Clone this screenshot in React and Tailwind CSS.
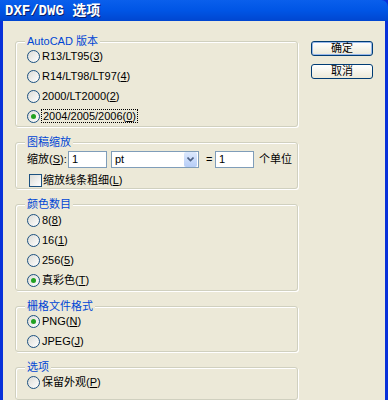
const font = { fontFamily: '"Liberation Sans", "Noto Sans CJK SC", sans-serif' };

function U({ children }) {
  return <span className="underline underline-offset-1">{children}</span>;
}

function Radio({ checked, children, focus }) {
  return (
    <div className="flex h-5 items-center">
      <span className="flex h-[13px] w-[13px] shrink-0 items-center justify-center rounded-full border border-[#1c5180] bg-gradient-to-br from-[#dcdcd7] to-white">
        {checked && <span className="h-[5px] w-[5px] rounded-full bg-[#21a121]" />}
      </span>
      <span className={focus ? 'ml-px border border-dotted border-black px-px leading-[12px]' : 'ml-[2px]'}>{children}</span>
    </div>
  );
}

function Group({ label, className, children }) {
  return (
    <div className={'relative rounded-[3px] border border-[#d0d0bf] shadow-[inset_1px_1px_0_white,1px_1px_0_white] ' + className}>
      <span className="absolute -top-[7px] left-[9px] bg-[#ece9d8] px-[2px] leading-[12px] text-[#0046d5]">{label}</span>
      {children}
    </div>
  );
}

function Button({ children, primary }) {
  return (
    <button
      className={
        'flex h-[15px] w-[62px] items-center justify-center rounded-[3px] border border-[#003c74] bg-gradient-to-b from-white to-[#ece9d8] text-[11px] leading-none text-black ' +
        (primary ? 'shadow-[inset_0_0_0_1px_#98b8ea]' : '')
      }
    >
      {children}
    </button>
  );
}

export default function App() {
  return (
    <div className="h-[400px] w-[388px] overflow-hidden bg-[#0831d9]" style={font}>
      {/* Title bar */}
      <div className="flex h-[21px] items-center rounded-tr-[7px] bg-gradient-to-b from-[#0a5fec] via-[#0055e5] to-[#0046d0] pl-[5px]">
        <span
          className="text-[14px] font-bold leading-none text-white [text-shadow:1px_1px_0_#0a1f6b]"
          style={{ fontFamily: '"Liberation Mono", "Noto Sans CJK SC", monospace' }}
        >
          DXF/DWG 选项
        </span>
      </div>

      <div className="mx-[3px] flex h-[379px] bg-[#ece9d8] pt-5 text-[11px] text-black">
        {/* Left column */}
        <div className="ml-[12px] flex w-[283px] shrink-0 flex-col gap-[15px]">
          <Group label="AutoCAD 版本" className="h-[88px] pl-[11px] pt-[4px]">
            <Radio>R13/LT95(<U>3</U>)</Radio>
            <Radio>R14/LT98/LT97(<U>4</U>)</Radio>
            <Radio>2000/LT2000(<U>2</U>)</Radio>
            <Radio checked focus>2004/2005/2006(<U>0</U>)</Radio>
          </Group>

          <Group label="图稿缩放" className="h-[53px] pl-[11px] pt-[8px]">
            <div className="flex h-[17px] items-center">
              <span className="w-[41px] shrink-0">缩放(<U>S</U>):</span>
              <span className="flex h-[17px] w-[39px] shrink-0 items-center border border-[#7f9db9] bg-white pl-[3px]">1</span>
              <span className="ml-[4px] flex h-[17px] w-[88px] shrink-0 items-center border border-[#7f9db9] bg-white pl-[3px]">
                <span className="flex-1">pt</span>
                <span className="mr-px flex h-[15px] w-[13px] items-center justify-center rounded-[2px] bg-gradient-to-b from-[#dde9fd] to-[#b6cdf7]">
                  <svg width="7" height="5" viewBox="0 0 7 5">
                    <path d="M0.5 0.5 L3.5 3.5 L6.5 0.5" fill="none" stroke="#4d6185" strokeWidth="1.6" />
                  </svg>
                </span>
              </span>
              <span className="ml-[7px] w-[9px] shrink-0">=</span>
              <span className="flex h-[17px] w-[39px] shrink-0 items-center border border-[#7f9db9] bg-white pl-[3px]">1</span>
              <span className="ml-[5px] shrink-0">个单位</span>
            </div>
            <div className="mt-[4px] flex h-4 items-center pl-[2px]">
              <span className="h-[13px] w-[13px] shrink-0 border border-[#1c5180] bg-gradient-to-br from-[#dcdcd7] to-white" />
              <span className="ml-[1px]">缩放线条粗细(<U>L</U>)</span>
            </div>
          </Group>

          <Group label="颜色数目" className="h-[88px] pl-[11px] pt-[5px]">
            <Radio>8(<U>8</U>)</Radio>
            <Radio>16(<U>1</U>)</Radio>
            <Radio>256(<U>5</U>)</Radio>
            <Radio checked>真彩色(<U>T</U>)</Radio>
          </Group>

          <Group label="栅格文件格式" className="h-[50px] pl-[11px] pt-[4px]">
            <Radio checked>PNG(<U>N</U>)</Radio>
            <Radio>JPEG(<U>J</U>)</Radio>
          </Group>

          <Group label="选项" className="h-[40px] pl-[11px] pt-[4px]">
            <Radio>保留外观(<U>P</U>)</Radio>
          </Group>
        </div>

        {/* Right column */}
        <div className="ml-[13px] flex flex-col gap-[8px]">
          <Button primary>确定</Button>
          <Button>取消</Button>
        </div>
      </div>
    </div>
  );
}
